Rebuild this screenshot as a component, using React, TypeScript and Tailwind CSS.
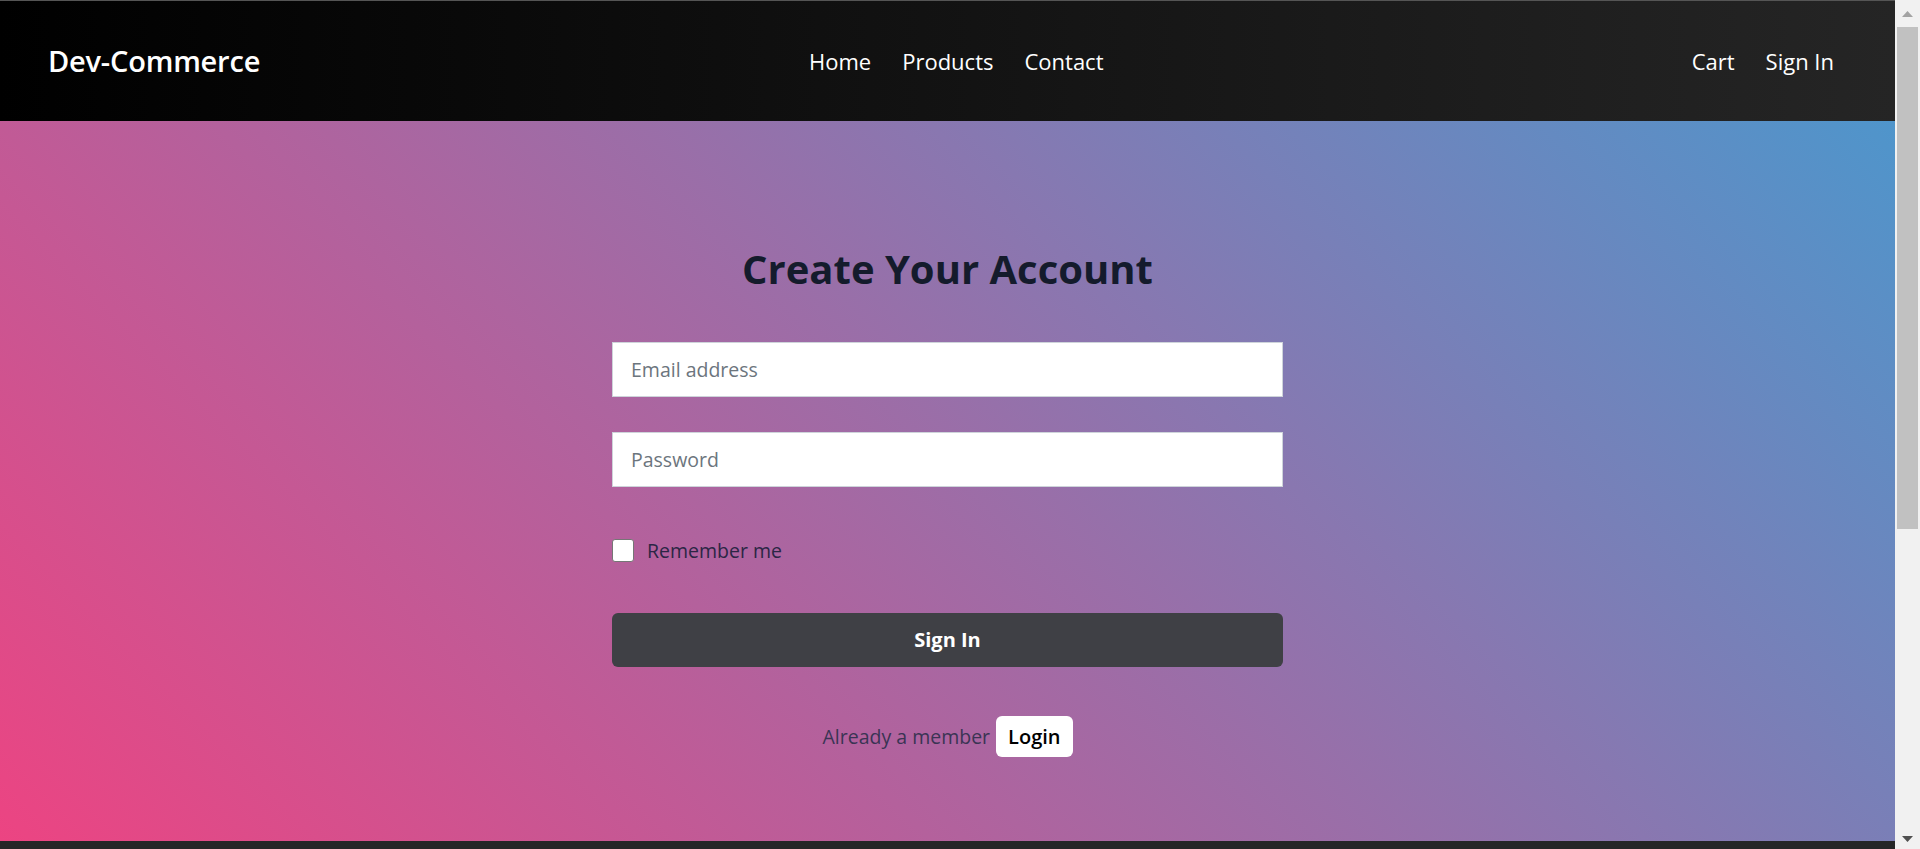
import React from "react";

function Scrollbar() {
  return (
    <div className="flex w-[25px] shrink-0 flex-col bg-[#f1f1f1]">
      <div className="flex h-[26px] items-center justify-center pt-[2px]">
        <svg width="11" height="6" viewBox="0 0 11 6">
          <polygon points="5.5,0 11,6 0,6" fill="#a3a3a3" />
        </svg>
      </div>
      <div className="mx-[2px] mt-[1px] h-[502px] bg-[#c1c1c1]" />
      <div className="mt-auto flex h-[16px] items-start justify-center pt-[3px]">
        <svg width="11" height="6" viewBox="0 0 11 6">
          <polygon points="0,0 11,0 5.5,6" fill="#505050" />
        </svg>
      </div>
    </div>
  );
}

export default function App() {
  return (
    <div className="flex h-screen overflow-hidden font-['Open_Sans',sans-serif]">
      <div className="min-w-0 flex-1">
        {/* Navbar */}
        <nav className="flex h-[121px] items-center border-t border-[#555555] bg-[linear-gradient(90deg,#000000,#252525)] pl-[48px] pr-[61px] text-white">
          <div className="w-[761px] shrink-0">
            <a className="text-[29px] font-semibold tracking-[-0.2px]">Dev-Commerce</a>
          </div>
          <ul className="flex items-center gap-[31px] text-[22px]">
            <li>Home</li>
            <li>Products</li>
            <li>Contact</li>
          </ul>
          <ul className="ml-auto flex items-center gap-[31px] text-[22px]">
            <li>Cart</li>
            <li>Sign In</li>
          </ul>
        </nav>

        {/* Main */}
        <section className="flex h-[720px] flex-col items-center bg-[linear-gradient(45deg,#ec4482,#4f95cb)] pt-[124px]">
          <h1 className="text-[40px] font-bold leading-[48px] text-[#141b2c]">
            Create Your Account
          </h1>
          <form className="mt-[49px] flex w-[671px] flex-col">
            <input
              type="email"
              placeholder="Email address"
              className="h-[55px] w-full border border-[#ced4da] bg-white pl-[18px] text-[19.5px] text-[#212529] outline-none placeholder:text-[#6c757d]"
            />
            <input
              type="password"
              placeholder="Password"
              className="mt-[35px] h-[55px] w-full border border-[#ced4da] bg-white pl-[18px] text-[19.5px] text-[#212529] outline-none placeholder:text-[#6c757d]"
            />
            <label className="mt-[52px] flex h-[23px] items-center gap-[13px] self-start">
              <input
                type="checkbox"
                className="h-[23px] w-[22px] appearance-none rounded-[3px] border border-[#767676] bg-white"
              />
              <span className="text-[19.5px] text-[#2b2645]">Remember me</span>
            </label>
            <button
              type="button"
              className="mt-[51px] h-[54px] w-full rounded-[6px] bg-[#3f4045] text-[20px] font-bold text-white"
            >
              Sign In
            </button>
          </form>
          <div className="mt-[49px] flex items-center gap-[6px]">
            <span className="text-[19.5px] text-[#3a3454]">Already a member</span>
            <button
              type="button"
              className="h-[41px] rounded-[6px] bg-white px-[12px] text-[20px] font-semibold text-black"
            >
              Login
            </button>
          </div>
        </section>

        {/* Footer */}
        <footer className="h-[514px] bg-[#252627]" />
      </div>
      <Scrollbar />
    </div>
  );
}
